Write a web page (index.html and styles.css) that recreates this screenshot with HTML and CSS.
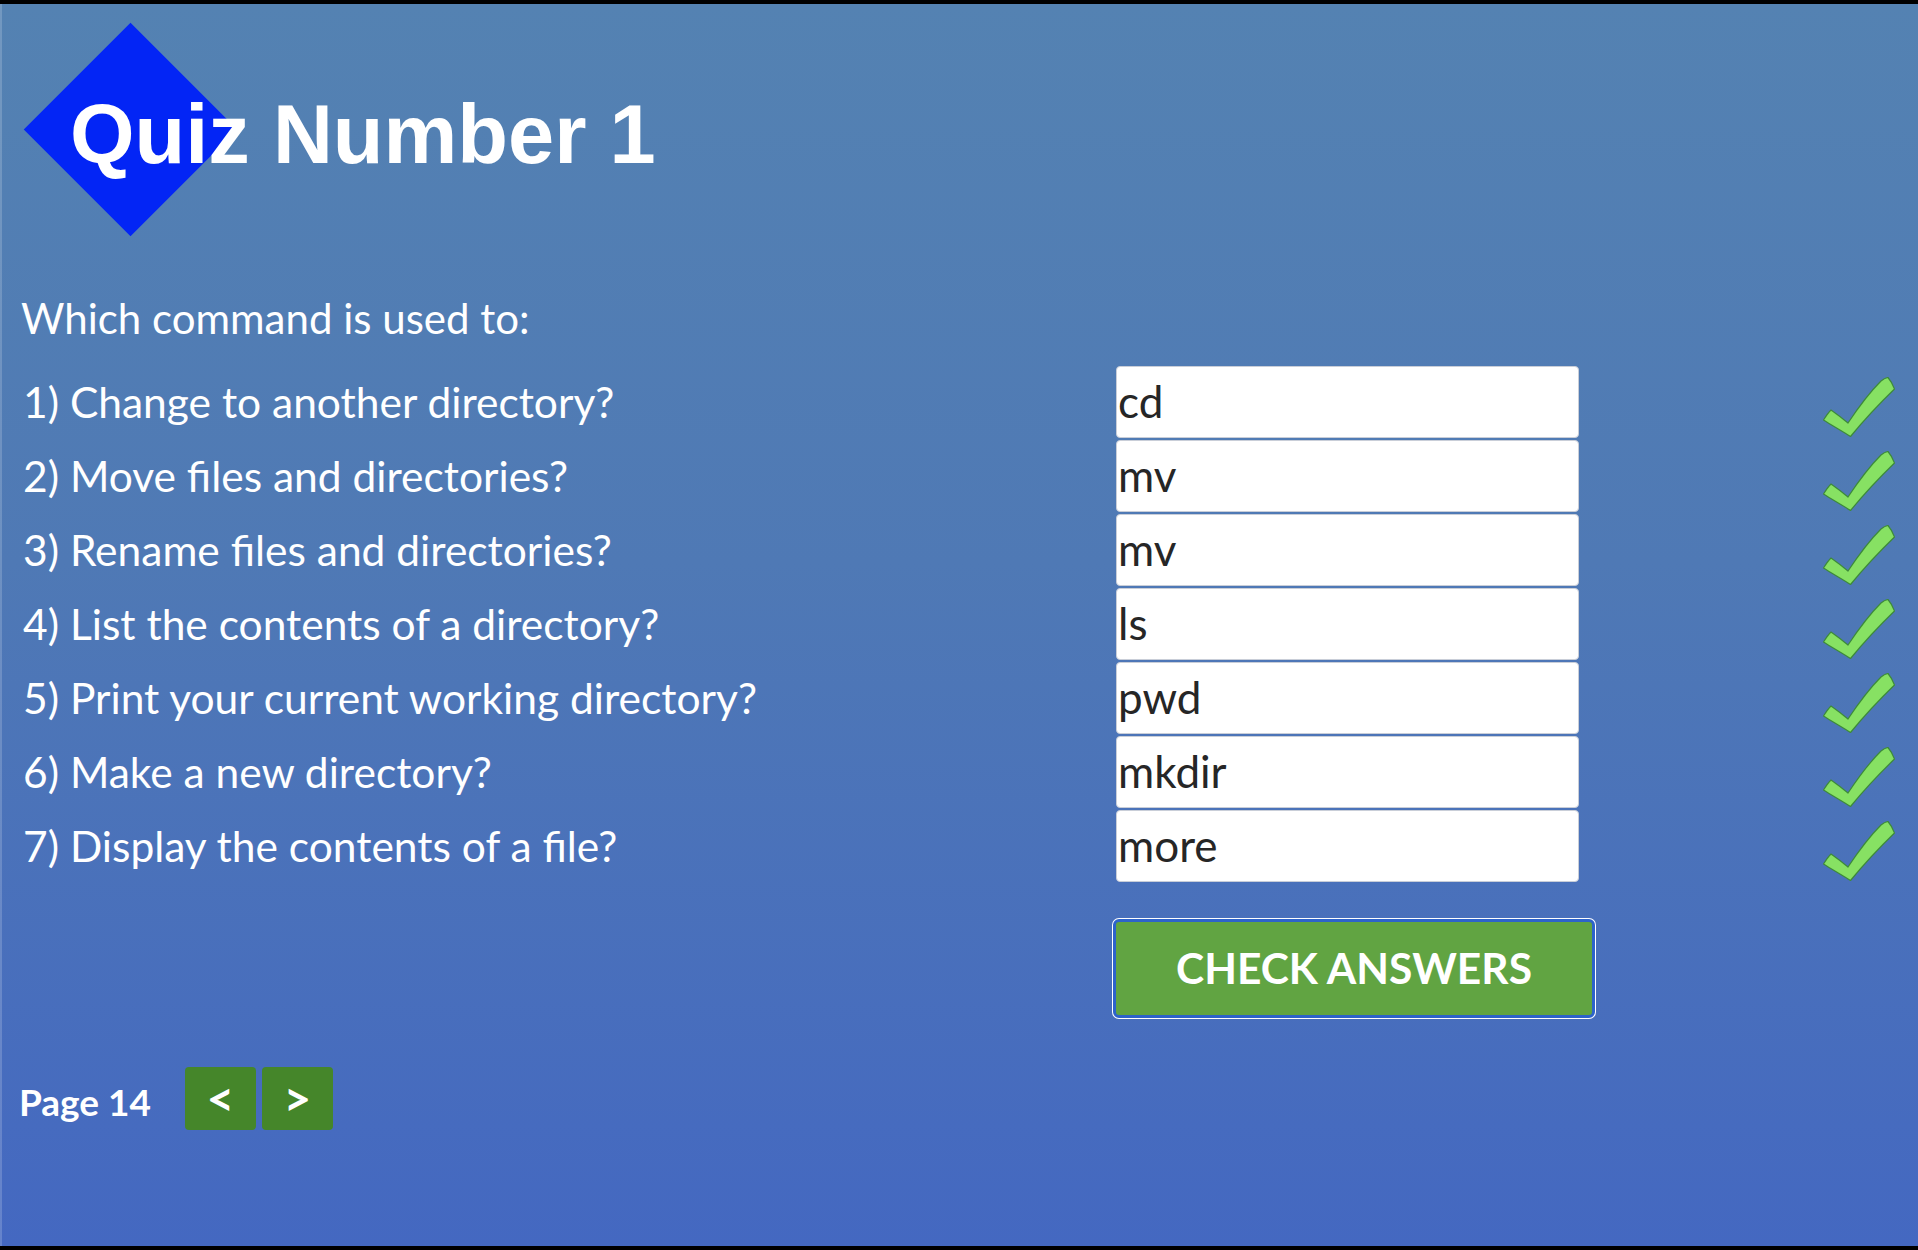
FILE: index.html
```html
<!DOCTYPE html>
<html lang="en">
<head>
<meta charset="utf-8">
<title>Quiz Number 1</title>
<link rel="stylesheet" href="styles.css">
</head>
<body>
<svg class="defs" width="0" height="0" aria-hidden="true">
  <symbol id="tick" viewBox="0 0 72 60">
    <path d="M0.5 43 C3 39 5.5 35.5 8 33 C13 36.5 19 41 25 46 C35 31 46 16 58 4 C60.5 2 62.5 0.8 65 0.5 C68 4 70 8 71.5 12 C56 27 41 43 27.5 59.5 C19 54 9 48.5 0.5 43 Z" fill="#87e163" stroke="#3d8a3a" stroke-width="1.2" stroke-linejoin="round"/>
  </symbol>
</svg>
<div class="page">
  <header class="hero">
    <span class="diamond"></span>
    <h1 class="title">Quiz Number 1</h1>
  </header>

  <main class="quiz">
    <p class="intro">Which command is used to:</p>
    <div class="rows">
      <label class="q" for="a1">1) Change to another directory?</label>
      <input class="answer" id="a1" value="cd">
      <svg class="tick"><use href="#tick"/></svg>

      <label class="q" for="a2">2) Move files and directories?</label>
      <input class="answer" id="a2" value="mv">
      <svg class="tick"><use href="#tick"/></svg>

      <label class="q" for="a3">3) Rename files and directories?</label>
      <input class="answer" id="a3" value="mv">
      <svg class="tick"><use href="#tick"/></svg>

      <label class="q" for="a4">4) List the contents of a directory?</label>
      <input class="answer" id="a4" value="ls">
      <svg class="tick"><use href="#tick"/></svg>

      <label class="q" for="a5">5) Print your current working directory?</label>
      <input class="answer" id="a5" value="pwd">
      <svg class="tick"><use href="#tick"/></svg>

      <label class="q" for="a6">6) Make a new directory?</label>
      <input class="answer" id="a6" value="mkdir">
      <svg class="tick"><use href="#tick"/></svg>

      <label class="q" for="a7">7) Display the contents of a file?</label>
      <input class="answer" id="a7" value="more">
      <svg class="tick"><use href="#tick"/></svg>
    </div>
    <div class="actions">
      <button class="check" type="button">CHECK ANSWERS</button>
    </div>
  </main>

  <footer class="pager">
    <span class="page-no">Page 14</span>
    <div class="nav">
      <button class="nav-btn" type="button">&lt;</button>
      <button class="nav-btn" type="button">&gt;</button>
    </div>
  </footer>
</div>
</body>
</html>
```
FILE: styles.css
```css
* { box-sizing: border-box; }

html, body {
  margin: 0;
  padding: 0;
}

body {
  font-family: Lato, "Open Sans", sans-serif;
  color: #fff;
  background: #000;
}

.defs { position: absolute; }

.page {
  position: relative;
  width: 1918px;
  height: 1250px;
  border-top: 4px solid #000;
  border-bottom: 4px solid #000;
  background: linear-gradient(180deg, #5482b2 0%, #4f79b5 45%, #4468c1 100%);
  box-shadow: inset 2px 0 0 rgba(255, 255, 255, 0.18);
  overflow: hidden;
}

/* ---------- header ---------- */
.hero {
  position: relative;
  padding: 90px 0 0 70px;
  height: 176px;
}

.diamond {
  position: absolute;
  left: 55px;
  top: 50px;
  width: 151px;
  height: 151px;
  background: #0325f5;
  transform: rotate(45deg);
}

.title {
  position: relative;
  margin: 0;
  font-family: "Liberation Sans", Arial, sans-serif;
  font-weight: bold;
  font-size: 83px;
  line-height: 82px;
  color: #fff;
}

/* ---------- quiz ---------- */
.quiz {
  padding-left: 21px;
}

.intro {
  margin: 113px 0 0;
  font-size: 42px;
  line-height: 50px;
}

.rows {
  margin-top: 23px;
  display: grid;
  grid-template-columns: 1095px 463px 1fr;
  grid-auto-rows: 72px;
  row-gap: 2px;
}

.q {
  align-self: center;
  margin-left: 2px;
  font-size: 42.5px;
  line-height: 50px;
  white-space: nowrap;
}

.answer {
  width: 463px;
  height: 72px;
  margin: 0;
  padding: 0 0 3px 1px;
  border: 1px solid #c9ced8;
  border-radius: 4px;
  background: #fff;
  font-family: Lato, sans-serif;
  font-size: 44px;
  color: #262626;
  outline: none;
}

.tick {
  width: 72px;
  height: 60px;
  align-self: end;
  justify-self: end;
  margin: 0 23px 1px 0;
}

.actions {
  display: grid;
  grid-template-columns: 1092px 484px;
  margin-top: 37px;
}

.check {
  grid-column: 2;
  width: 482px;
  height: 99px;
  margin: 0;
  padding: 0 0 2px;
  border: 3px solid #2d63cb;
  border-radius: 6px;
  box-shadow: 0 0 0 1px #fff;
  background: #61a442;
  color: #fff;
  font-family: Lato, sans-serif;
  font-weight: bold;
  font-size: 42.5px;
  cursor: pointer;
}

/* ---------- pager ---------- */
.pager {
  display: flex;
  align-items: center;
  margin-top: 49px;
  padding-left: 19px;
}

.page-no {
  font-weight: bold;
  font-size: 37px;
  line-height: 45px;
  padding-top: 6px;
  margin-right: 34px;
}

.nav {
  display: flex;
  gap: 6px;
}

.nav-btn {
  width: 71px;
  height: 63px;
  margin: 0;
  padding: 0 0 2px;
  border: 0;
  border-radius: 4px;
  background: #45862a;
  color: #fff;
  font-family: Lato, sans-serif;
  font-weight: bold;
  font-size: 48px;
  cursor: pointer;
}
```
